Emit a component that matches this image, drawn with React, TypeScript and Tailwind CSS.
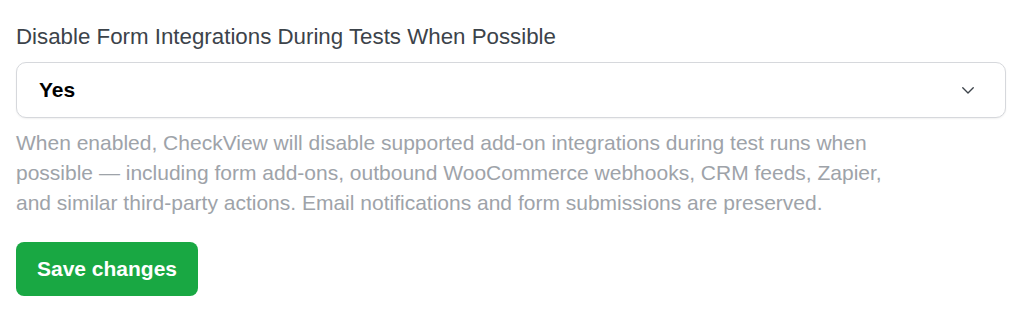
import React from 'react';

export default function App() {
  return (
    <div className="w-[1024px] h-[318px] bg-white px-4 pt-[24px] font-['Liberation_Sans',Arial,sans-serif]">
      <label className="block text-[22.3px] leading-[26px] text-[#3c434a]">
        Disable Form Integrations During Tests When Possible
      </label>

      <div className="mt-[12px] flex h-[56px] w-[990px] items-center justify-between rounded-[10px] border border-[#d6d8dc] bg-white pl-[22px] pr-[28px] shadow-[0_1px_2px_rgba(0,0,0,0.06)]">
        <span className="text-[21px] font-bold text-black">Yes</span>
        <svg width="18" height="18" viewBox="0 0 24 24" fill="none" stroke="#3c434a" strokeWidth="1.8" strokeLinecap="round" strokeLinejoin="round">
          <path d="M5 9l7 7 7-7" />
        </svg>
      </div>

      <p className="mt-[10px] text-[21px] leading-[30px] text-[#9ea3a9]">
        When enabled, CheckView will disable supported add-on integrations during test runs when
        <br />
        possible — including form add-ons, outbound WooCommerce webhooks, CRM feeds, Zapier,
        <br />
        and similar third-party actions. Email notifications and form submissions are preserved.
      </p>

      <button className="mt-[24px] flex h-[54px] w-[182px] items-center justify-center rounded-[8px] bg-[#19a843] text-[21px] font-bold text-white">
        Save changes
      </button>
    </div>
  );
}
